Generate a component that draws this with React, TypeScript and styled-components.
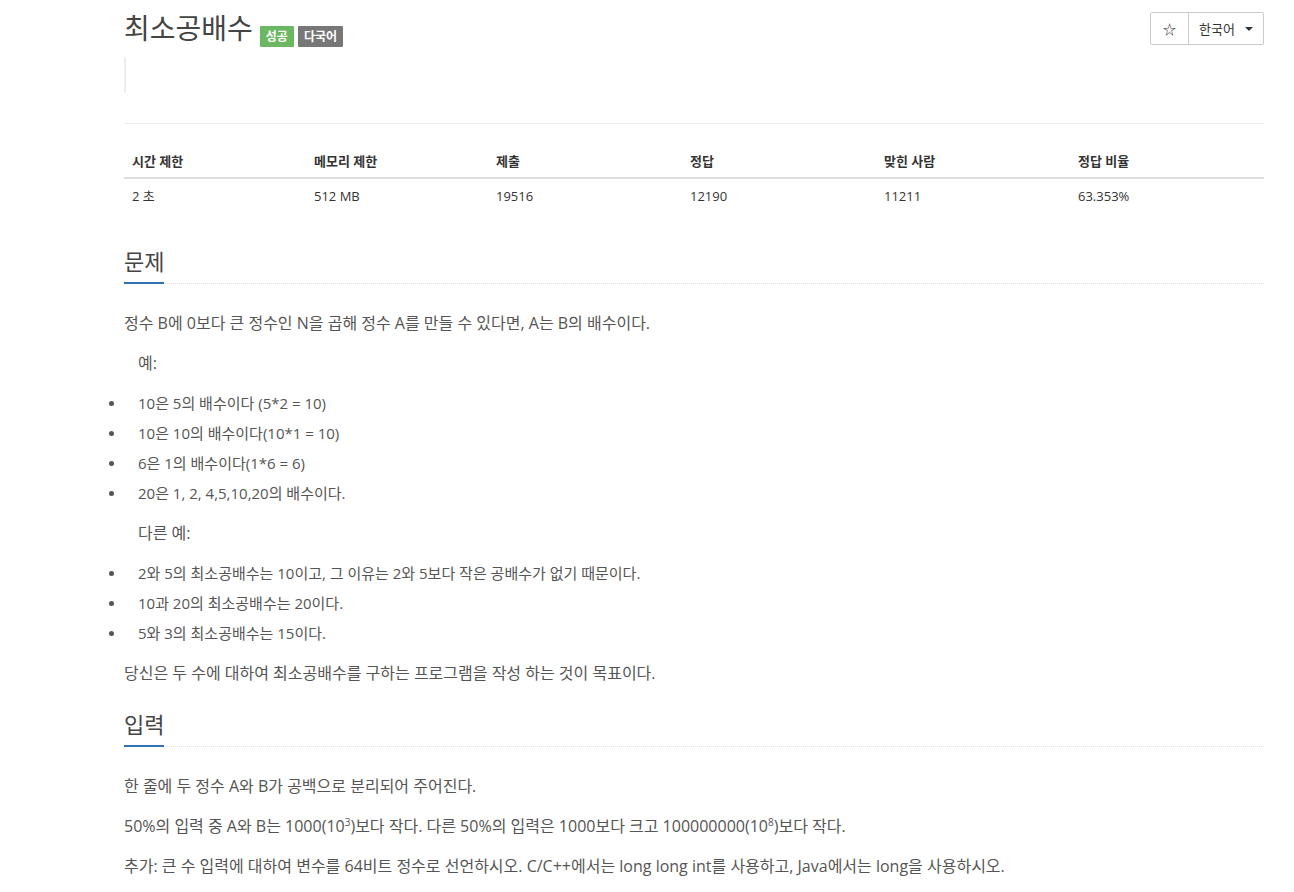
import styled, { createGlobalStyle } from "styled-components";

const GlobalStyle = createGlobalStyle`
	body {
		margin: 0;
		background: #fff;
		font-family: "Open Sans", "Noto Sans CJK KR", sans-serif;
		color: #555;
	}
`;

const Page = styled.div`
	padding: 10px 0 0 124px;
	width: 1140px;
`;

const TitleRow = styled.div`
	display: flex;
	align-items: flex-start;
	justify-content: space-between;
`;

const Title = styled.h1`
	margin: 0;
	display: flex;
	align-items: flex-end;
	gap: 4px;
	font-size: 28px;
	font-weight: 400;
	color: #444;
	line-height: 36px;
`;

const TitleText = styled.span`
	margin-right: 3px;
`;

const Label = styled.span<{ color: string }>`
	display: inline-block;
	background: ${(p) => p.color};
	color: #fff;
	font-size: 12px;
	font-weight: 700;
	line-height: 21px;
	padding: 0 6px;
	margin-bottom: -1px;
	border-radius: 1px;
`;

const ButtonGroup = styled.div`
	display: flex;
	border: 1px solid #ccc;
	border-radius: 2px;
	height: 31px;
	margin-top: 2px;
`;

const GroupButton = styled.div<{ pad: number }>`
	display: flex;
	align-items: center;
	gap: 10px;
	padding: 0 ${(p) => p.pad}px;
	font-size: 13px;
	color: #333;
	& + & {
		border-left: 1px solid #ccc;
	}
`;

const Caret = styled.span`
	width: 0;
	height: 0;
	border-left: 4px solid transparent;
	border-right: 4px solid transparent;
	border-top: 4px solid #333;
`;

const Quote = styled.div`
	margin-top: 11px;
	height: 36px;
	border-left: 2px solid #eee;
`;

const Rule = styled.hr`
	border: 0;
	border-top: 1px solid #eee;
	margin: 30px 0 0;
`;

const Table = styled.table`
	width: 100%;
	table-layout: fixed;
	margin-top: 27px;
	border-collapse: collapse;
	font-size: 13px;
	color: #333;
`;

const Th = styled.th<{ w: number }>`
	box-sizing: border-box;
	width: ${(p) => p.w}px;
	text-align: left;
	font-weight: 700;
	padding: 0 8px 6px;
	border-bottom: 2px solid #ddd;
	line-height: 20px;
`;

const Td = styled.td`
	padding: 7px 8px 8px;
	line-height: 20px;
`;

const Headline = styled.div<{ top: number }>`
	margin-top: ${(p) => p.top}px;
	border-bottom: 1px dotted #ddd;
`;

const HeadlineText = styled.h2`
	display: inline-block;
	margin: 0 0 -1px;
	font-size: 22px;
	font-weight: 400;
	color: #444;
	line-height: 32px;
	padding-bottom: 5px;
	border-bottom: 2px solid #3171b7;
`;

const Body = styled.div`
	font-size: 16px;
	line-height: 20px;
	padding-top: 29px;
`;

const P = styled.p<{ indent?: boolean }>`
	margin: 0 0 20px;
	padding-left: ${(p) => (p.indent ? "14px" : "0")};
	&:last-child {
		margin-bottom: 0;
	}
`;

const List = styled.ul`
	margin: 0 0 20px;
	padding-left: 14px;
	list-style: none;
`;

const Item = styled.li`
	position: relative;
	margin-bottom: 10px;
	font-size: 15px;
	&::before {
		content: "";
		position: absolute;
		left: -29px;
		top: 8px;
		width: 5px;
		height: 5px;
		border-radius: 50%;
		background: #555;
	}
`;

const Sup = styled.sup`
	font-size: 10px;
	line-height: 0;
`;

const stats = [
	{ label: "시간 제한", value: "2 초", w: 182 },
	{ label: "메모리 제한", value: "512 MB", w: 182 },
	{ label: "제출", value: "19516", w: 194 },
	{ label: "정답", value: "12190", w: 194 },
	{ label: "맞힌 사람", value: "11211", w: 194 },
	{ label: "정답 비율", value: "63.353%", w: 194 },
];

export default function App() {
	return (
		<Page>
			<GlobalStyle />
			<TitleRow>
				<Title>
					<TitleText>최소공배수</TitleText>
					<Label color="#6cb862">성공</Label>
					<Label color="#777">다국어</Label>
				</Title>
				<ButtonGroup>
					<GroupButton pad={12}>☆</GroupButton>
					<GroupButton pad={10}>
						한국어
						<Caret />
					</GroupButton>
				</ButtonGroup>
			</TitleRow>
			<Quote />
			<Rule />
			<Table>
				<thead>
					<tr>
						{stats.map((s) => (
							<Th key={s.label} w={s.w}>
								{s.label}
							</Th>
						))}
					</tr>
				</thead>
				<tbody>
					<tr>
						{stats.map((s) => (
							<Td key={s.label}>{s.value}</Td>
						))}
					</tr>
				</tbody>
			</Table>

			<Headline top={31}>
				<HeadlineText>문제</HeadlineText>
			</Headline>
			<Body>
				<P>정수 B에 0보다 큰 정수인 N을 곱해 정수 A를 만들 수 있다면, A는 B의 배수이다.</P>
				<P indent>예:</P>
				<List>
					<Item>10은 5의 배수이다 (5*2 = 10)</Item>
					<Item>10은 10의 배수이다(10*1 = 10)</Item>
					<Item>6은 1의 배수이다(1*6 = 6)</Item>
					<Item>20은 1, 2, 4,5,10,20의 배수이다.</Item>
				</List>
				<P indent>다른 예:</P>
				<List>
					<Item>2와 5의 최소공배수는 10이고, 그 이유는 2와 5보다 작은 공배수가 없기 때문이다.</Item>
					<Item>10과 20의 최소공배수는 20이다.</Item>
					<Item>5와 3의 최소공배수는 15이다.</Item>
				</List>
				<P>당신은 두 수에 대하여 최소공배수를 구하는 프로그램을 작성 하는 것이 목표이다.</P>
			</Body>

			<Headline top={25}>
				<HeadlineText>입력</HeadlineText>
			</Headline>
			<Body>
				<P>한 줄에 두 정수 A와 B가 공백으로 분리되어 주어진다.</P>
				<P>
					50%의 입력 중 A와 B는 1000(10<Sup>3</Sup>)보다 작다. 다른 50%의 입력은 1000보다 크고 100000000(10
					<Sup>8</Sup>)보다 작다.
				</P>
				<P>
					추가: 큰 수 입력에 대하여 변수를 64비트 정수로 선언하시오. C/C++에서는 long long int를 사용하고, Java에서는
					long을 사용하시오.
				</P>
			</Body>
		</Page>
	);
}
